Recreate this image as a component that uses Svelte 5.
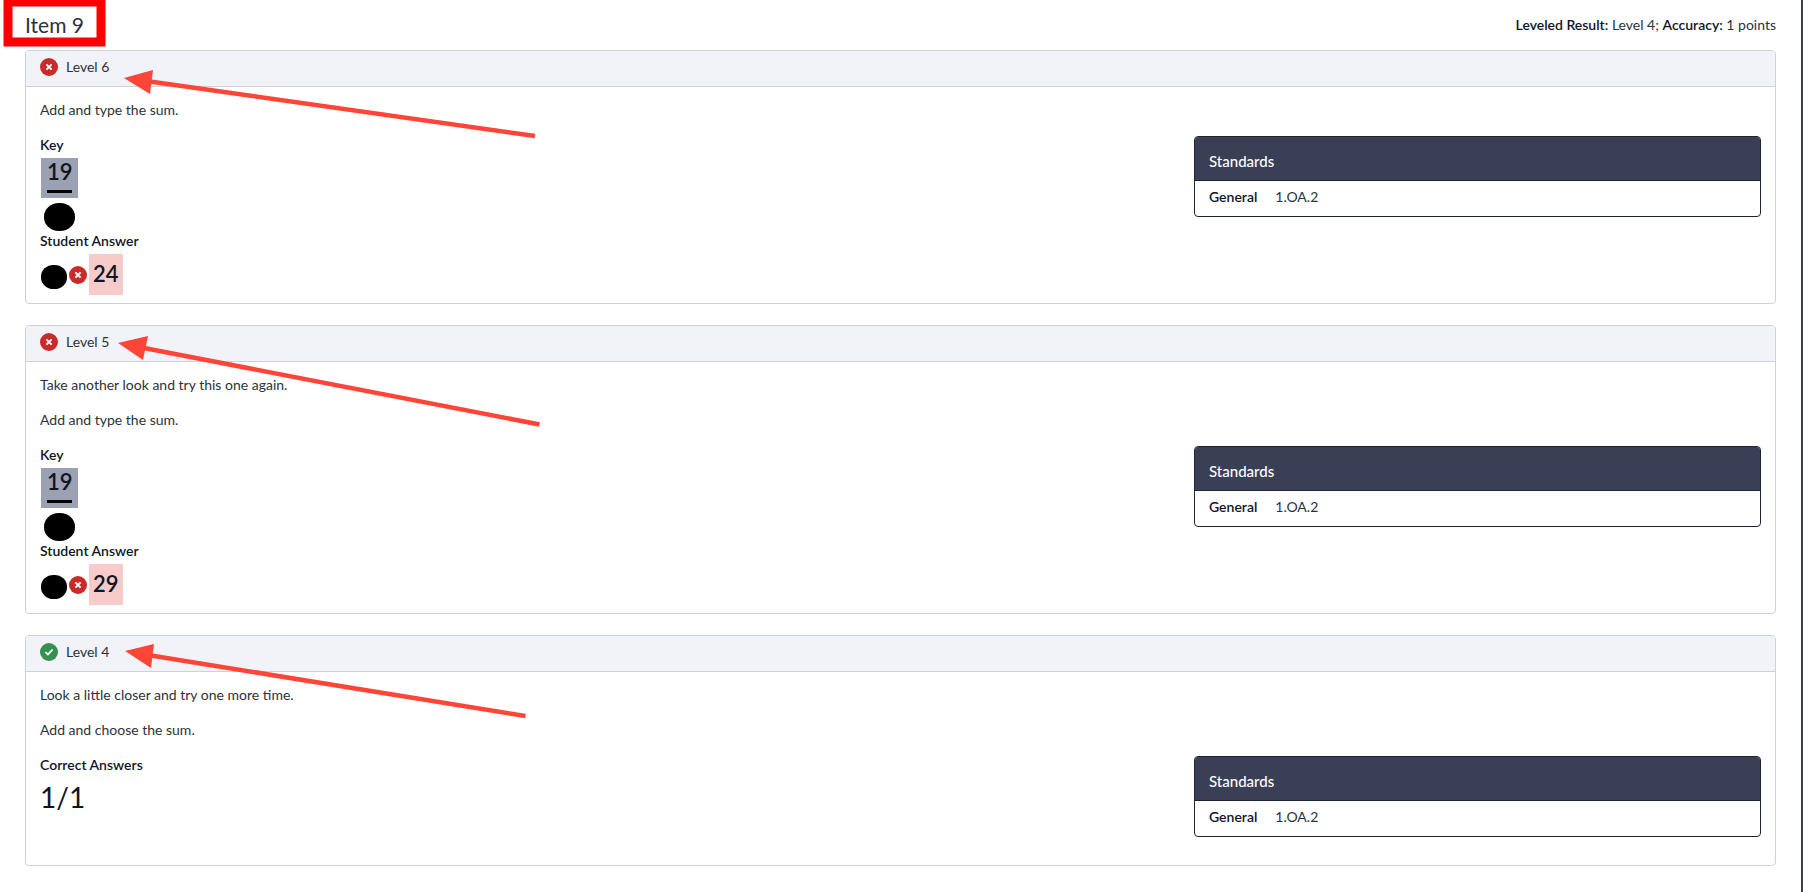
<script lang="ts">
	type Level = {
		name: string;
		correct: boolean;
		prompts: string[];
		key?: string;
		answer?: string;
		score?: string;
	};

	const levels: Level[] = [
		{
			name: 'Level 6',
			correct: false,
			prompts: ['Add and type the sum.'],
			key: '19',
			answer: '24'
		},
		{
			name: 'Level 5',
			correct: false,
			prompts: ['Take another look and try this one again.', 'Add and type the sum.'],
			key: '19',
			answer: '29'
		},
		{
			name: 'Level 4',
			correct: true,
			prompts: ['Look a little closer and try one more time.', 'Add and choose the sum.'],
			score: '1/1'
		}
	];

	// callout arrows drawn over the page
	const arrows = [
		{ head: '124,78 153,70 150,94', x1: 150, y1: 81.5, x2: 535, y2: 136 },
		{ head: '118,343 148,336 143,360', x1: 144, y1: 348, x2: 539.5, y2: 424.5 },
		{ head: '125,651 154,644 151,668', x1: 151, y1: 655.5, x2: 525.5, y2: 716 }
	];
</script>

{#snippet mark(correct: boolean)}
	<svg class="mark" viewBox="0 0 18 18" aria-hidden="true">
		<circle cx="9" cy="9" r="9" fill={correct ? '#34914f' : '#c92a2a'} />
		{#if correct}
			<path d="M5.4 9.2 L7.9 11.5 L12.6 6.7" fill="none" stroke="#fff" stroke-width="1.8" />
		{:else}
			<path d="M6.4 6.4 L11.6 11.6 M11.6 6.4 L6.4 11.6" stroke="#fff" stroke-width="2" />
		{/if}
	</svg>
{/snippet}

<main class="page">
	<header class="top">
		<h1>Item 9</h1>
		<div><strong>Leveled Result:</strong> Level 4; <strong>Accuracy:</strong> 1 points</div>
	</header>

	{#each levels as level}
		<section class="card">
			<h2 class="card-header">
				{@render mark(level.correct)}
				{level.name}
			</h2>
			<div class="card-body">
				{#each level.prompts as prompt}
					<p>{prompt}</p>
				{/each}
				<div class="row">
					<div>
						{#if level.key}
							<strong class="label">Key</strong>
							<div class="key"><span>{level.key}</span></div>
							<div class="blob"></div>
							<strong class="label">Student Answer</strong>
							<div class="answer">
								<div class="blob small"></div>
								{@render mark(level.correct)}
								<span class="wrong">{level.answer}</span>
							</div>
						{:else}
							<strong class="label">Correct Answers</strong>
							<div class="score">{level.score}</div>
						{/if}
					</div>
					<div class="standards">
						<h3>Standards</h3>
						<dl>
							<dt>General</dt>
							<dd>1.OA.2</dd>
						</dl>
					</div>
				</div>
			</div>
		</section>
	{/each}

	<svg class="notes" aria-hidden="true">
		<rect x="8" y="2" width="93" height="40" fill="none" stroke="#f00" stroke-width="9" />
		{#each arrows as a}
			<line x1={a.x1} y1={a.y1} x2={a.x2} y2={a.y2} stroke="#ff4438" stroke-width="4.5" />
			<polygon points={a.head} fill="#ff4438" />
		{/each}
	</svg>
</main>

<style>
	:global(body) {
		margin: 0;
		background: #fff;
	}
	.page {
		position: relative;
		box-sizing: border-box;
		min-height: 100vh;
		padding: 0 25px;
		border-right: 2px solid #394056;
		font-family: Lato, "Open Sans", sans-serif;
		font-size: 14px;
		line-height: 18px;
		color: #2b323b;
	}
	.top {
		display: flex;
		justify-content: space-between;
		align-items: center;
		height: 50px;
	}
	h1,
	h2,
	h3,
	p,
	dl,
	dd {
		margin: 0;
	}
	h1 {
		font-size: 21px;
		font-weight: 400;
	}
	strong,
	dt {
		font-weight: 600;
		color: #10151f;
	}
	.card {
		margin-bottom: 21px;
		border: 1px solid #ced1d6;
		border-radius: 4px;
	}
	.card-header {
		display: flex;
		align-items: center;
		gap: 8px;
		padding: 7px 14px 10px;
		border-bottom: 1px solid #ced1d6;
		border-radius: 3px 3px 0 0;
		background: #f2f3f8;
		font-size: 14px;
		font-weight: 400;
	}
	.mark {
		width: 18px;
		height: 18px;
		flex: none;
	}
	.card-body {
		padding: 14px 14px 8px;
	}
	p {
		margin-bottom: 17px;
	}
	.row {
		display: grid;
		grid-template-columns: 2fr 1fr;
		gap: 20px;
		align-items: start;
	}
	.label {
		display: block;
	}
	.key {
		box-sizing: border-box;
		width: 37px;
		height: 40px;
		margin: 4px 1px 5px;
		padding: 0 6px;
		background: #9aa1b3;
		color: #10151f;
		font-size: 22px;
		line-height: 28px;
		font-weight: 600;
		text-align: center;
	}
	.key span {
		display: block;
		border-bottom: 3px solid #000;
		padding-bottom: 4px;
	}
	.blob {
		width: 31px;
		height: 28px;
		margin: 0 4px 1px;
		border-radius: 48%;
		background: #000;
	}
	.answer {
		display: flex;
		align-items: center;
		gap: 2px;
		margin: 4px 1px 0;
	}
	.blob.small {
		width: 26px;
		height: 24px;
		margin: 4px 0 0;
	}
	.wrong {
		padding: 0 4px 2px;
		background: #f8cbcb;
		color: #10151f;
		font-size: 22px;
		line-height: 39px;
		font-weight: 600;
	}
	.score {
		margin-top: 3px;
		color: #10151f;
		font-size: 28px;
		line-height: 40px;
	}
	.standards {
		margin-bottom: 20px;
		border: 1px solid #1f2433;
		border-radius: 4px;
		overflow: hidden;
	}
	h3 {
		padding: 15px 14px 10px;
		border-bottom: 1px solid #1f2433;
		background: #394056;
		color: #fff;
		font-size: 15px;
		font-weight: 500;
	}
	dl {
		display: flex;
		gap: 18px;
		padding: 7px 14px 10px;
	}
	.notes {
		position: absolute;
		top: 0;
		left: 0;
		width: 100%;
		height: 100%;
		pointer-events: none;
	}
</style>
